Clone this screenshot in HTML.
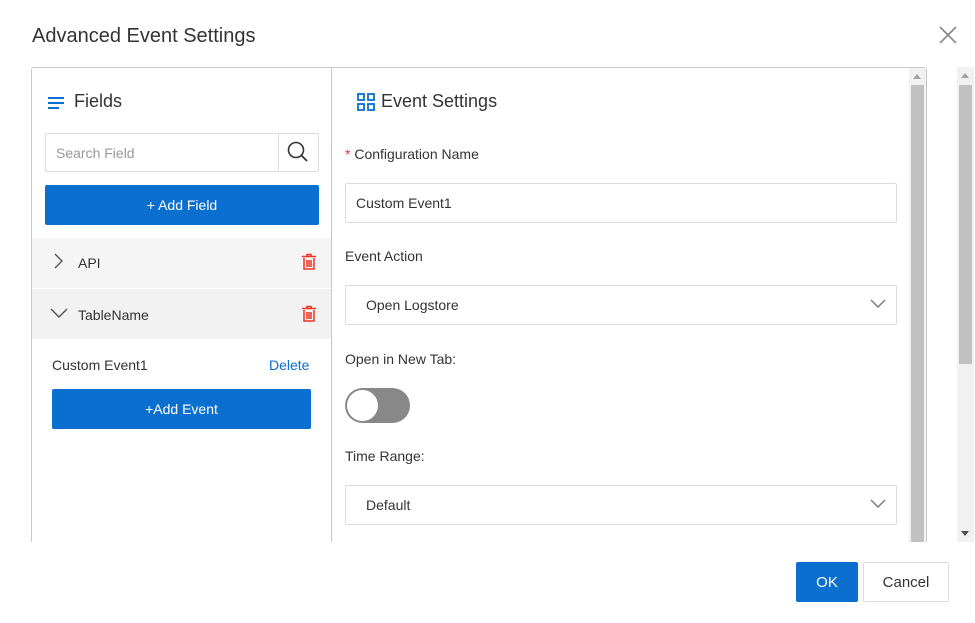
<!DOCTYPE html>
<html><head><style>
*{box-sizing:border-box;margin:0;padding:0}
body{width:975px;height:623px;background:#fff;font-family:"Liberation Sans",sans-serif;color:#333;position:relative;overflow:hidden;font-size:14px}
.a{position:absolute}
.title{left:32px;top:25px;font-size:20px;color:#333}
.box{left:31px;top:67px;width:896px;height:490px;border:1px solid #c8c8c8;border-bottom:none;border-radius:3px 3px 0 0}
.btn{background:#0a6fcf;color:#fff;text-align:center;border-radius:2px}
.inp{border:1px solid #dcdcdc;border-radius:2px;background:#fff}
.lbl{font-size:14px;color:#333}
</style></head><body>
<div class="a title">Advanced Event Settings</div>
<svg class="a" style="left:939px;top:26px" width="18" height="18"><path d="M1 1L17 17M17 1L1 17" stroke="#888" stroke-width="1.6"/></svg>
<div class="a box"></div>
<div class="a" style="left:331px;top:67px;width:1px;height:476px;background:#c8c8c8"></div>
<div class="a" style="left:0;top:542px;width:975px;height:81px;background:#fff"></div>
<!-- left panel -->
<svg class="a" style="left:48px;top:96px" width="17" height="14"><path d="M0 2H16M0 7H16M0 12H11" stroke="#0a6fcf" stroke-width="2"/></svg>
<div class="a" style="left:74px;top:91px;font-size:18px;color:#333">Fields</div>
<div class="a inp" style="left:45px;top:133px;width:274px;height:39px"></div>
<div class="a" style="left:278px;top:134px;width:1px;height:37px;background:#dcdcdc"></div>
<div class="a" style="left:56px;top:145px;color:#999">Search Field</div>
<svg class="a" style="left:287px;top:141px" width="22" height="22"><circle cx="9" cy="9" r="7.5" fill="none" stroke="#333" stroke-width="1.6"/><path d="M14.5 14.5L20 20" stroke="#333" stroke-width="1.8"/></svg>
<div class="a btn" style="left:45px;top:185px;width:274px;height:40px;line-height:40px">+ Add Field</div>
<div class="a" style="left:32px;top:238px;width:299px;height:50px;background:#f5f5f5"></div>
<div class="a" style="left:32px;top:289px;width:299px;height:50px;background:#f2f2f2"></div>
<svg class="a" style="left:53px;top:253px" width="12" height="16"><path d="M2 1L9 8L2 15" fill="none" stroke="#555" stroke-width="1.4"/></svg>
<div class="a" style="left:78px;top:255px">API</div>
<svg class="a" style="left:50px;top:307px" width="18" height="12"><path d="M1 2L9 10L17 2" fill="none" stroke="#555" stroke-width="1.4"/></svg>
<div class="a" style="left:78px;top:307px">TableName</div>
<svg class="a" style="left:301px;top:253px" width="16" height="17"><path d="M1 3.5H15M6 3.5V1.5H10V3.5M3 5V16H13V5M6 7V14M8 7V14M10 7V14" fill="none" stroke="#e32" stroke-width="1.5"/></svg>
<svg class="a" style="left:301px;top:305px" width="16" height="17"><path d="M1 3.5H15M6 3.5V1.5H10V3.5M3 5V16H13V5M6 7V14M8 7V14M10 7V14" fill="none" stroke="#e32" stroke-width="1.5"/></svg>
<div class="a" style="left:52px;top:357px">Custom Event1</div>
<div class="a" style="left:269px;top:357px;color:#0a6fcf">Delete</div>
<div class="a btn" style="left:52px;top:389px;width:259px;height:40px;line-height:40px">+Add Event</div>
<!-- right panel -->
<svg class="a" style="left:357px;top:93px" width="18" height="18"><g fill="none" stroke="#0a6fcf" stroke-width="1.8"><rect x="1" y="1" width="6" height="6"/><rect x="11" y="1" width="6" height="6"/><rect x="1" y="11" width="6" height="6"/><rect x="11" y="11" width="6" height="6"/></g></svg>
<div class="a" style="left:381px;top:91px;font-size:18px">Event Settings</div>
<div class="a" style="left:345px;top:146px"><span style="color:#e33">*</span> Configuration Name</div>
<div class="a inp" style="left:345px;top:183px;width:552px;height:40px"></div>
<div class="a" style="left:356px;top:195px">Custom Event1</div>
<div class="a lbl" style="left:345px;top:248px">Event Action</div>
<div class="a inp" style="left:345px;top:285px;width:552px;height:40px"></div>
<div class="a" style="left:366px;top:297px">Open Logstore</div>
<svg class="a" style="left:870px;top:299px" width="16" height="10"><path d="M1 1L8 8L15 1" fill="none" stroke="#777" stroke-width="1.4"/></svg>
<div class="a lbl" style="left:345px;top:351px">Open in New Tab:</div>
<div class="a" style="left:345px;top:388px;width:65px;height:35px;border-radius:18px;background:#888"></div>
<div class="a" style="left:347px;top:390px;width:31px;height:31px;border-radius:50%;background:#fff"></div>
<div class="a lbl" style="left:345px;top:448px">Time Range:</div>
<div class="a inp" style="left:345px;top:485px;width:552px;height:40px"></div>
<div class="a" style="left:366px;top:497px">Default</div>
<svg class="a" style="left:870px;top:499px" width="16" height="10"><path d="M1 1L8 8L15 1" fill="none" stroke="#777" stroke-width="1.4"/></svg>
<!-- scrollbars -->
<div class="a" style="left:909px;top:68px;width:17px;height:474px;background:#f1f1f1"></div>
<div class="a" style="left:911px;top:85px;width:13px;height:457px;background:#c1c1c1"></div>
<svg class="a" style="left:913px;top:74px" width="8" height="5"><path d="M0 5L4 0L8 5Z" fill="#a3a3a3"/></svg>
<div class="a" style="left:957px;top:67px;width:17px;height:475px;background:#f1f1f1"></div>
<div class="a" style="left:959px;top:85px;width:13px;height:279px;background:#c1c1c1"></div>
<svg class="a" style="left:961px;top:73px" width="8" height="5"><path d="M0 5L4 0L8 5Z" fill="#a3a3a3"/></svg>
<svg class="a" style="left:961px;top:531px" width="8" height="5"><path d="M0 0L4 5L8 0Z" fill="#505050"/></svg>
<!-- footer -->
<div class="a btn" style="left:796px;top:562px;width:62px;height:40px;line-height:42px;font-size:15px">OK</div>
<div class="a" style="left:863px;top:562px;width:86px;height:40px;line-height:40px;border:1px solid #dcdcdc;border-radius:2px;text-align:center;font-size:15px">Cancel</div>
</body></html>
